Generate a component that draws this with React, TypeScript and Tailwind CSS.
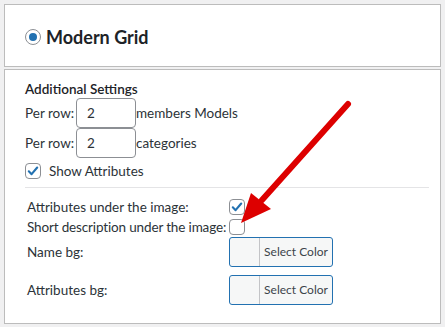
import React from "react";

function Checkbox({ checked }: { checked?: boolean }) {
  return (
    <span className="w-4 h-4 shrink-0 rounded-[4px] border border-[#8c8f94] bg-white flex items-center justify-center">
      {checked && (
        <svg width="14" height="14" viewBox="0 0 20 20">
          <path d="M4 10.5 L8 14.5 L16 5" fill="none" stroke="#2271b1" strokeWidth="3" strokeLinecap="round" strokeLinejoin="round" />
        </svg>
      )}
    </span>
  );
}

function ColorButton() {
  return (
    <div className="w-[104px] h-[30px] flex rounded-[3px] border border-[#2271b1] bg-[#f6f7f7] overflow-hidden">
      <span className="w-[30px] h-full border-r border-[#c3c4c7]" />
      <span className="flex-1 flex items-center justify-center text-[12px] text-[#3c434a]">Select Color</span>
    </div>
  );
}

export default function App() {
  return (
    <div className="w-[445px] h-[327px] bg-[#f0f0f1] p-1 relative text-[#2c3338] font-['Lato',sans-serif] whitespace-nowrap">
      {/* Header box */}
      <div className="h-[63px] bg-white border border-[#bcbcbc] flex items-center pl-5 pt-[3px] gap-[5px]">
        <span className="w-4 h-4 rounded-full border border-[#8c8f94] bg-white flex items-center justify-center">
          <span className="w-2 h-2 rounded-full bg-[#2271b1]" />
        </span>
        <span className="text-[18px] font-bold text-[#1d2327]">Modern Grid</span>
      </div>

      {/* Settings box */}
      <div className="mt-[2px] h-[255px] bg-white border border-[#bcbcbc] pl-5 pr-[11px] pt-[10px] text-[13.5px]">
        <div className="font-semibold text-[#1d2327] leading-[18px]">Additional Settings</div>
        <div className="flex items-center h-[30px]">
          <span className="w-[51px]">Per row:</span>
          <span className="w-[60px] h-[30px] rounded-[4px] border border-[#8c8f94] flex items-center pl-[10px]">2</span>
          <span>members Models</span>
        </div>
        <div className="flex items-center h-[30px]">
          <span className="w-[51px]">Per row:</span>
          <span className="w-[60px] h-[30px] rounded-[4px] border border-[#8c8f94] flex items-center pl-[10px]">2</span>
          <span>categories</span>
        </div>
        <div className="flex items-center gap-2 mt-[5px] h-4 leading-[16px]">
          <Checkbox checked />
          <span>Show Attributes</span>
        </div>
        <div className="mt-2 border-t border-[#e4e4e6]" />
        <div className="pl-[2px] mt-[11px] grid grid-cols-[202px_auto] items-center leading-[16px]">
          <span>Attributes under the image:</span>
          <Checkbox checked />
          <span className="mt-1 tracking-[-0.15px]">Short description under the image:</span>
          <span className="mt-1"><Checkbox /></span>
          <span className="mt-[2px]">Name bg:</span>
          <span className="mt-[2px]"><ColorButton /></span>
          <span className="mt-2">Attributes bg:</span>
          <span className="mt-2"><ColorButton /></span>
        </div>
      </div>

      {/* Red annotation arrow */}
      <svg className="absolute left-0 top-0 pointer-events-none" width="445" height="327">
        <line x1="348" y1="104" x2="262" y2="200" stroke="#dd0000" strokeWidth="6" strokeLinecap="round" />
        <polygon points="241,223 251,193 271,209" fill="#dd0000" />
      </svg>
    </div>
  );
}
